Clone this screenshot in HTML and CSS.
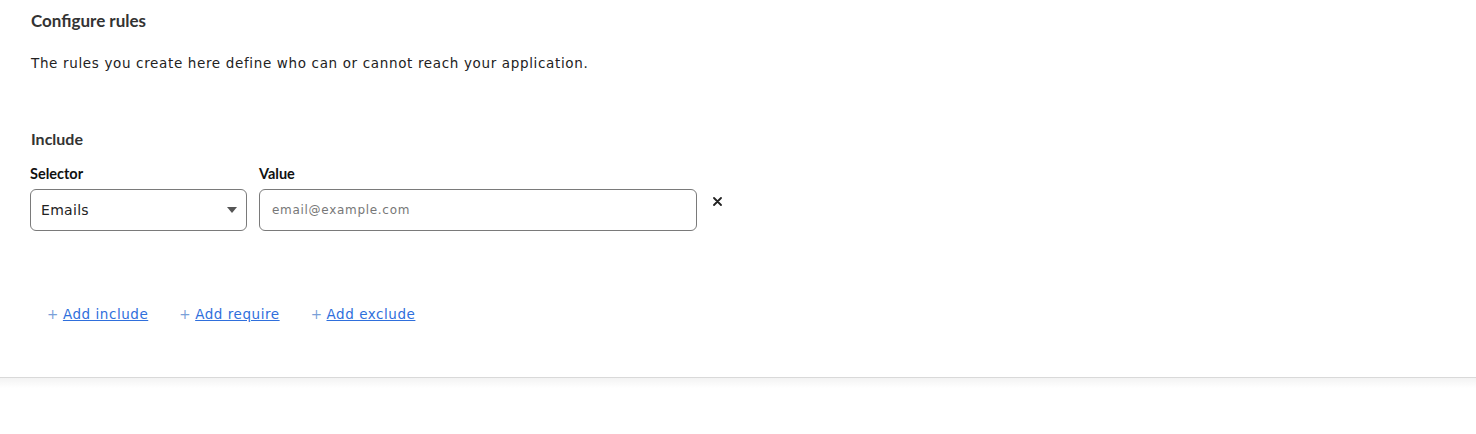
FILE: index.html
```html
<!DOCTYPE html>
<html lang="en">
<head>
<meta charset="utf-8">
<title>Configure rules</title>
<link rel="stylesheet" href="styles.css">
</head>
<body>
<main class="page">
  <section class="rules">
    <h2 class="title">Configure rules</h2>
    <p class="desc">The rules you create here define who can or cannot reach your application.</p>
    <h3 class="group-title">Include</h3>
    <div class="rule-row">
      <div class="field field-selector">
        <label class="label">Selector</label>
        <div class="select">
          <span class="select-text">Emails</span>
          <svg class="caret" width="10" height="6" viewBox="0 0 10 6"><path d="M0 0h10L5 6z" fill="#555"/></svg>
        </div>
      </div>
      <div class="field field-value">
        <label class="label">Value</label>
        <div class="input"><span class="placeholder">email@example.com</span></div>
      </div>
      <button class="remove" aria-label="Remove">
        <svg width="9" height="9" viewBox="0 0 9 9"><path d="M1 1l7 7M8 1l-7 7" stroke="#222" stroke-width="1.8" stroke-linecap="round"/></svg>
      </button>
    </div>
    <div class="actions">
      <a class="add" href="#"><span class="plus">+</span><span class="link">Add include</span></a>
      <a class="add" href="#"><span class="plus">+</span><span class="link">Add require</span></a>
      <a class="add" href="#"><span class="plus">+</span><span class="link">Add exclude</span></a>
    </div>
  </section>
  <div class="divider"></div>
</main>
</body>
</html>
```
FILE: styles.css
```css
html, body {
  margin: 0;
  padding: 0;
  background: #fff;
}
body {
  font-family: "DejaVu Sans", "Liberation Sans", sans-serif;
  color: #222;
}
.page {
  width: 1476px;
  height: 434px;
  overflow: hidden;
}
.rules {
  padding: 11px 31px 0;
  height: 377px;
  box-sizing: border-box;
}
.title {
  margin: 0;
  font-family: "Lato", sans-serif;
  font-size: 17px;
  font-weight: bold;
  line-height: 20px;
  color: #333;
}
.desc {
  margin: 23px 0 0;
  font-size: 13.5px;
  letter-spacing: 0.65px;
  line-height: 18px;
  color: #222;
}
.group-title {
  margin: 57px 0 0;
  font-family: "Lato", sans-serif;
  font-size: 16px;
  font-weight: bold;
  line-height: 20px;
  color: #333;
}
.rule-row {
  margin-top: 16px;
  display: flex;
  align-items: flex-start;
  margin-left: -1px;
}
.field {
  display: flex;
  flex-direction: column;
}
.field-selector { width: 217px; }
.field-value { width: 438px; margin-left: 12px; }
.label {
  font-family: "Lato", sans-serif;
  font-size: 14.5px;
  font-weight: bold;
  line-height: 18px;
  margin-bottom: 6px;
  color: #111;
}
.select, .input {
  height: 42px;
  box-sizing: border-box;
  border: 1px solid #7a7a7a;
  border-radius: 6px;
  display: flex;
  align-items: center;
}
.select {
  padding: 0 9px 0 10px;
  justify-content: space-between;
}
.select-text {
  font-size: 14px;
  letter-spacing: 0.3px;
  color: #222;
}
.input {
  padding: 0 12px;
}
.placeholder {
  font-size: 12px;
  letter-spacing: 0.7px;
  color: #777;
}
.remove {
  margin: 32px 0 0 16px;
  padding: 0;
  border: 0;
  background: none;
  width: 9px;
  height: 9px;
  display: flex;
}
.actions {
  margin-top: 74px;
  margin-left: 16px;
  display: flex;
  gap: 31px;
}
.add {
  text-decoration: none;
  font-size: 13.5px;
  letter-spacing: 0.55px;
  line-height: 18px;
  display: flex;
  gap: 4px;
}
.plus {
  color: #7aa0d8;
}
.link {
  color: #2f6fdc;
  text-decoration: underline;
}
.divider {
  height: 10px;
  border-top: 1px solid #d9d9d9;
  background: linear-gradient(#f3f3f3, #fff);
}
```
